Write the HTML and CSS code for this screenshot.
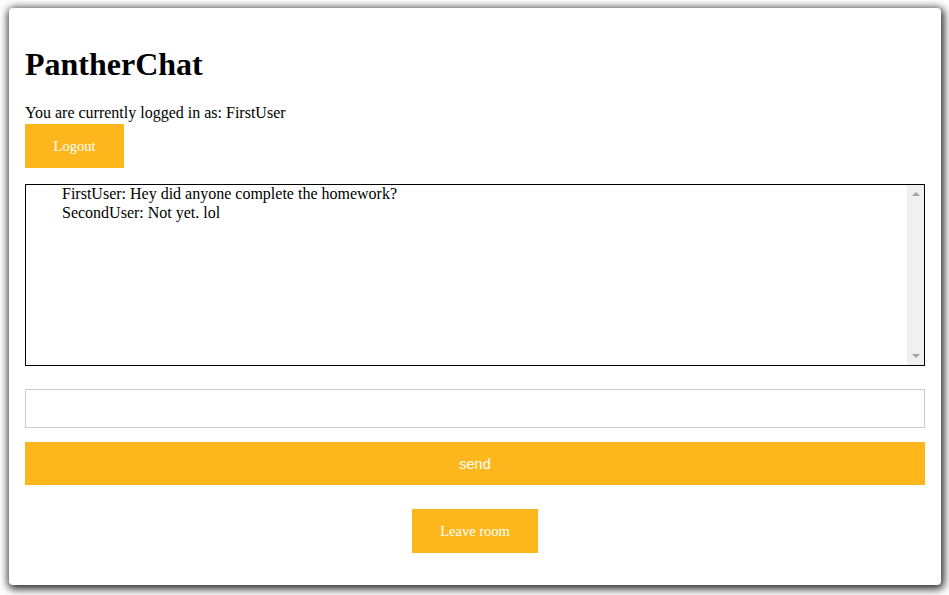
FILE: index.html
```html
<!DOCTYPE html>
<html>
<head>
<meta charset="utf-8">
<link rel="stylesheet" href="styles.css">
</head>
<body>
<div class="page">
<div class="card">
  <h1 class="title">PantherChat</h1>
  <div class="status">You are currently logged in as: FirstUser</div>
  <button class="btn logout">Logout</button>
  <div class="chatbox">
    <ul class="messages">
      <li>FirstUser: Hey did anyone complete the homework?</li>
      <li>SecondUser: Not yet. lol</li>
    </ul>
    <div class="scrollbar">
      <span class="arrow up"></span>
      <span class="arrow down"></span>
    </div>
  </div>
  <input class="msg-input" type="text">
  <button class="send">send</button>
  <div class="leave-row">
    <button class="btn leave">Leave room</button>
  </div>
</div>
</div>
</body>
</html>
```
FILE: styles.css
```css
html, body {
  margin: 0;
  padding: 0;
  background: #ffffff;
}
body {
  font-family: "Liberation Serif", "Times New Roman", serif;
  font-size: 16px;
  color: #000;
}
.page {
  padding: 8px 8px 10px 9px;
}
.card {
  box-sizing: border-box;
  width: 932px;
  height: 577px;
  padding: 16px 16px 0 16px;
  background: #fff;
  border-radius: 4px;
  box-shadow: 1px 2px 8px 2px rgba(0, 0, 0, 0.85);
}
.title {
  font-size: 32px;
  font-weight: bold;
  margin: 21.5px 0 21.5px 0;
}
.status {
  line-height: 18.4px;
}
.btn {
  display: block;
  border: none;
  background: #fdb71d;
  color: #fff;
  font-family: "Liberation Serif", "Times New Roman", serif;
  font-size: 14.5px;
  padding: 0;
  cursor: pointer;
}
.logout {
  margin-top: 2px;
  width: 99px;
  height: 44px;
}
.chatbox {
  display: flex;
  margin-top: 16px;
  height: 182px;
  box-sizing: border-box;
  border: 1px solid #000;
}
.messages {
  flex: 1;
  list-style: none;
  margin: 0;
  padding: 0 0 0 36px;
  line-height: 18.4px;
}
.scrollbar {
  width: 17px;
  background: #f0f0f0;
  display: flex;
  flex-direction: column;
  justify-content: space-between;
  align-items: center;
  padding: 7px 0 7px 0;
}
.arrow {
  width: 0;
  height: 0;
  border-left: 4px solid transparent;
  border-right: 4px solid transparent;
}
.arrow.up {
  border-bottom: 4px solid #a3a3a3;
}
.arrow.down {
  border-top: 4px solid #a3a3a3;
}
.msg-input {
  display: block;
  box-sizing: border-box;
  width: 100%;
  height: 39px;
  margin-top: 23px;
  border: 1px solid #cccccc;
  padding: 0 10px;
  outline: none;
}
.send {
  display: block;
  width: 100%;
  height: 43px;
  margin-top: 14px;
  border: none;
  background: #fdb71d;
  color: #fff;
  font-family: "Liberation Sans", Arial, sans-serif;
  font-size: 14.5px;
  padding: 0;
}
.leave-row {
  display: flex;
  justify-content: center;
  margin-top: 24px;
}
.leave {
  width: 126px;
  height: 44px;
}
```
